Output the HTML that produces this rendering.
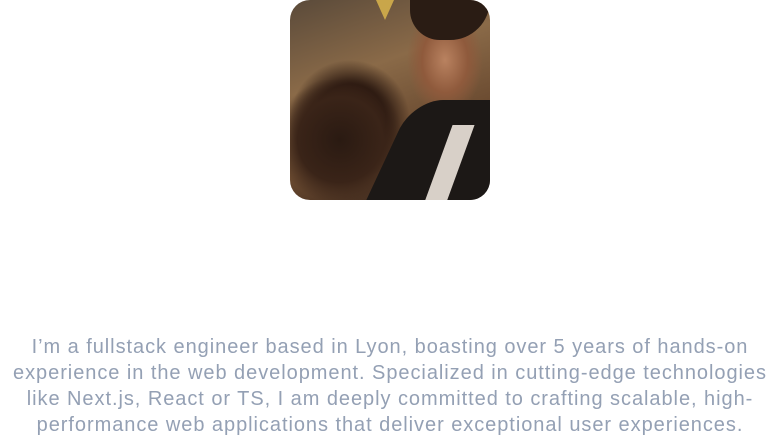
<!DOCTYPE html>
<html><head><style>
html,body{margin:0;padding:0;background:#fff;width:780px;height:438px;overflow:hidden}
.img{position:absolute;left:290px;top:0;width:200px;height:200px;border-radius:20px;overflow:hidden;
background:
radial-gradient(ellipse 38px 55px at 155px 60px,#b98260 0%,#8f5a3c 60%,transparent 100%),
radial-gradient(ellipse 60px 60px at 60px 120px,#3a2216 0%,#2a1810 60%,transparent 100%),
linear-gradient(160deg,#5a4a3a 0%,#8a6a48 35%,#6a4a30 65%,#2a1a14 100%);}
.hair{position:absolute;left:120px;top:0;width:80px;height:40px;background:#2a1c14;border-radius:0 0 40px 30px}
.suit{position:absolute;left:95px;top:100px;width:130px;height:120px;background:#1c1816;transform:skewX(-25deg);border-radius:30px 0 0 0}
.shirt{position:absolute;left:148px;top:125px;width:22px;height:80px;background:#d8d0c8;transform:skewX(-20deg)}
.flag{position:absolute;left:86px;top:0;width:0;height:0;border-left:9px solid transparent;border-right:9px solid transparent;border-top:20px solid #c9a64a}
.hand{position:absolute;left:-10px;top:80px;width:120px;height:120px;background:radial-gradient(circle,#2a1a12 0%,#3a2418 50%,transparent 75%)}
.txt{position:absolute;left:0;top:334px;width:780px;text-align:center;font-family:"Liberation Sans",sans-serif;font-size:20px;line-height:26px;color:#94a0b4;white-space:nowrap;letter-spacing:0.95px}
</style></head><body>
<div class="img"><div class="hand"></div><div class="suit"></div><div class="shirt"></div><div class="hair"></div><div class="flag"></div></div>
<div class="txt">I’m a fullstack engineer based in Lyon, boasting over 5 years of hands-on<br>experience in the web development. Specialized in cutting-edge technologies<br>like Next.js, React or TS, I am deeply committed to crafting scalable, high-<br>performance web applications that deliver exceptional user experiences.</div>
</body></html>
